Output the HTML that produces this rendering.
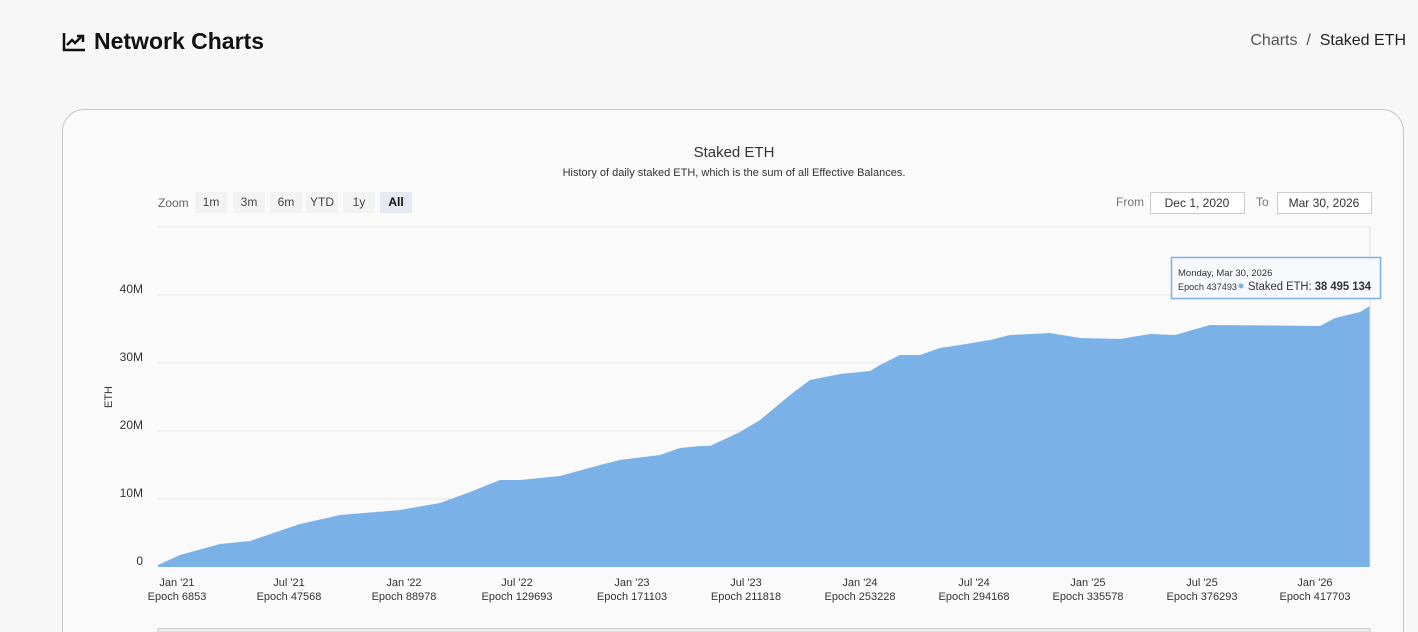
<!DOCTYPE html>
<html><head><style>
html,body{margin:0;padding:0;overflow:hidden}
#w{width:1418px;height:632px;background:#f7f7f7;font-family:"Liberation Sans",sans-serif;overflow:hidden;position:relative}
.h{position:absolute;left:62px;top:28px;font-size:23px;font-weight:bold;color:#111;display:flex;align-items:center;gap:8px}
.bc{position:absolute;right:12px;top:32px;font-size:16px;color:#555}
.bc b{font-weight:normal;color:#222}
.card{position:absolute;left:62px;top:109px;width:1342px;height:523px;box-sizing:border-box;border:1px solid #c8c8c8;border-bottom:none;border-radius:22px 22px 0 0;background:#fafafa}
</style></head><body><div id="w">
<div class="h"><svg width="24" height="20" viewBox="0 0 24 20"><path d="M2 1V18H23" stroke="#111" stroke-width="2.5" fill="none"/><path d="M5 13L10 8L13 11L19 5" stroke="#111" stroke-width="2.5" fill="none"/><path d="M15 4H21V10" stroke="#111" stroke-width="2.5" fill="none"/></svg>Network Charts</div>
<div class="bc">Charts &nbsp;/ &nbsp;<b>Staked ETH</b></div>
<div class="card"></div>
<svg style="position:absolute;left:0;top:0;display:block" width="1418" height="632" font-family="Liberation Sans, sans-serif">
<text x="734" y="157" font-size="15" text-anchor="middle" fill="#333">Staked ETH</text>
<text x="734" y="176" font-size="11" text-anchor="middle" fill="#333">History of daily staked ETH, which is the sum of all Effective Balances.</text>
<text x="158" y="207" font-size="12" fill="#666">Zoom</text>
<g font-size="12" fill="#444" text-anchor="middle">
<rect x="195" y="192" width="32" height="21" fill="#f3f3f3"/><text x="211" y="206">1m</text>
<rect x="233" y="192" width="32" height="21" fill="#f3f3f3"/><text x="249" y="206">3m</text>
<rect x="270" y="192" width="32" height="21" fill="#f3f3f3"/><text x="286" y="206">6m</text>
<rect x="306" y="192" width="32" height="21" fill="#f3f3f3"/><text x="322" y="206">YTD</text>
<rect x="343" y="192" width="32" height="21" fill="#f3f3f3"/><text x="359" y="206">1y</text>
<rect x="380" y="192" width="32" height="21" fill="#e6e9f2"/><text x="396" y="206" font-weight="bold" fill="#111">All</text>
</g>
<text x="1116" y="206" font-size="12" fill="#777">From</text>
<rect x="1150.5" y="192.5" width="94" height="21" fill="#fff" stroke="#ccc"/><text x="1197" y="207" font-size="12" text-anchor="middle" fill="#333">Dec 1, 2020</text>
<text x="1256" y="206" font-size="12" fill="#777">To</text>
<rect x="1277.5" y="192.5" width="94" height="21" fill="#fff" stroke="#ccc"/><text x="1324" y="207" font-size="12" text-anchor="middle" fill="#333">Mar 30, 2026</text>
<g stroke="#e6e6e6"><line x1="158" x2="1370" y1="227" y2="227"/><line x1="158" x2="1370" y1="295" y2="295"/><line x1="158" x2="1370" y1="363" y2="363"/><line x1="158" x2="1370" y1="431" y2="431"/><line x1="158" x2="1370" y1="499" y2="499"/></g>
<g font-size="12" fill="#333" text-anchor="end"><text x="143" y="293">40M</text><text x="143" y="361">30M</text><text x="143" y="429">20M</text><text x="143" y="497">10M</text><text x="143" y="565">0</text></g>
<text x="112" y="397" font-size="11" fill="#333" transform="rotate(-90 112 397)" text-anchor="middle">ETH</text>
<path fill="#7ab2e8" d="M158,565 L180,555 L220,544 L250,541 L300,524 L340,515 L400,510 L440,503 L470,492 L500,480 L520,480 L560,476 L600,465 L620,460 L660,455 L680,448 L700,446 L710,446 L740,432 L760,420 L790,395 L810,380 L840,374 L870,371 L880,365 L900,355 L920,355 L940,348 L960,345 L990,340 L1010,335 L1050,333 L1080,338 L1120,339 L1150,334 L1175,335 L1210,325 L1320,326 L1335,318 L1360,312 L1370,306 L1370,567 L158,567Z"/>
<line x1="1370" x2="1370" y1="227" y2="567" stroke="#ddd"/>
<g font-size="11" fill="#333" text-anchor="middle">
<text x="177" y="586">Jan '21</text><text x="177" y="600">Epoch 6853</text>
<text x="289" y="586">Jul '21</text><text x="289" y="600">Epoch 47568</text>
<text x="404" y="586">Jan '22</text><text x="404" y="600">Epoch 88978</text>
<text x="517" y="586">Jul '22</text><text x="517" y="600">Epoch 129693</text>
<text x="632" y="586">Jan '23</text><text x="632" y="600">Epoch 171103</text>
<text x="746" y="586">Jul '23</text><text x="746" y="600">Epoch 211818</text>
<text x="860" y="586">Jan '24</text><text x="860" y="600">Epoch 253228</text>
<text x="974" y="586">Jul '24</text><text x="974" y="600">Epoch 294168</text>
<text x="1088" y="586">Jan '25</text><text x="1088" y="600">Epoch 335578</text>
<text x="1202" y="586">Jul '25</text><text x="1202" y="600">Epoch 376293</text>
<text x="1315" y="586">Jan '26</text><text x="1315" y="600">Epoch 417703</text>
</g>
<rect x="158" y="628.5" width="1212" height="3.5" fill="#eee" stroke="#ccc"/>
<rect x="1171.5" y="257.5" width="209" height="41" fill="#f7f9fc" stroke="#7ab2e8" stroke-width="1.5"/>
<text x="1178" y="276" font-size="9.5" fill="#333">Monday, Mar 30, 2026</text>
<text x="1178" y="290" font-size="9.5" fill="#333" textLength="59" lengthAdjust="spacingAndGlyphs">Epoch 437493</text>
<circle cx="1241" cy="286" r="2.5" fill="#7ab2e8"/>
<text x="1248" y="290" font-size="11.5" fill="#333" textLength="123" lengthAdjust="spacingAndGlyphs">Staked ETH: <tspan font-weight="bold">38 495 134</tspan></text>
</svg>
</div></body></html>
